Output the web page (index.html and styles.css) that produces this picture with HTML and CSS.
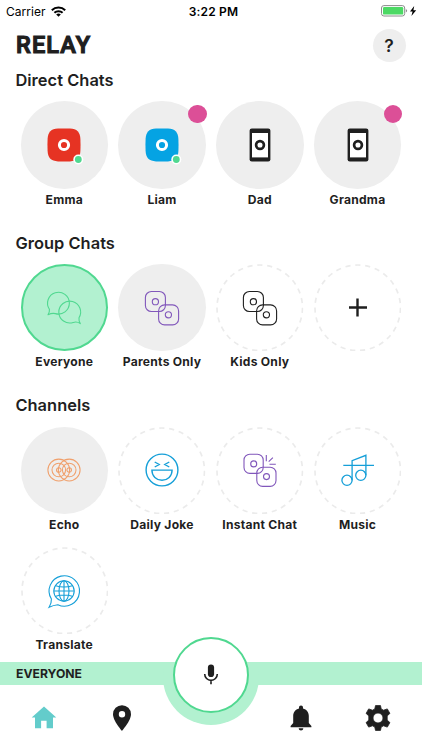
FILE: index.html
```html
<!DOCTYPE html>
<html lang="en">
<head>
<meta charset="utf-8">
<meta name="viewport" content="width=device-width, initial-scale=1">
<title>Relay</title>
<link rel="stylesheet" href="styles.css">
</head>
<body>
<svg class="defs" aria-hidden="true">
  <symbol id="device" viewBox="-22 -22 44 44">
    <path fill="currentColor" d="M-6-16.4Q0-16.700 6-16.400C13-16 16-13 16.400-6Q16.700 0 16.400 6C16 13 13 16 6 16.400Q0 16.700-6 16.400C-13 16-16 13-16.400 6Q-16.700 0-16.400-6C-16-13-13-16-6-16.400Z"/>
    <circle r="4.6" fill="none" stroke="#fff" stroke-width="3"/>
    <circle cx="14.3" cy="14.5" r="5" fill="#fff"/>
    <circle cx="14.3" cy="14.5" r="3.4" fill="#50d890"/>
  </symbol>
  <symbol id="phone" viewBox="-22 -22 44 44">
    <rect x="-10.4" y="-16.5" width="20.8" height="33" rx="2.2" fill="#1f1f1f"/>
    <rect x="-8" y="-12" width="16" height="24.4" fill="#fff"/>
    <circle r="3.9" fill="none" stroke="#1f1f1f" stroke-width="2.7"/>
  </symbol>
  <symbol id="pair" viewBox="-22 -22 44 44">
    <g fill="none" stroke="currentColor" stroke-width="1.1">
      <rect x="-16.6" y="-16.5" width="20" height="20" rx="6"/>
      <rect x="-3.4" y="-3.1" width="20" height="20" rx="6"/>
      <circle cx="-6.6" cy="-6.3" r="3.1"/>
      <circle cx="6.4" cy="6.8" r="3.1"/>
    </g>
  </symbol>
  <symbol id="ring" viewBox="0 0 88 88">
    <circle cx="44" cy="44" r="43" fill="none" stroke="#ebebeb" stroke-width="1.7" pathLength="270" stroke-dasharray="5.2 4.8"/>
  </symbol>
</svg>

<div class="app">
  <div class="status">
    <div class="carrier">Carrier
      <svg width="15" height="11" viewBox="0 0 15 11"><g fill="none" stroke="#000" stroke-width="2"><path d="M.8 4.2a9.6 9.6 0 0 1 13.4 0"/><path d="M3.4 6.8a5.9 5.9 0 0 1 8.2 0"/></g><path d="M7.5 10.8 5.2 8.5a3.3 3.3 0 0 1 4.6 0z"/></svg>
    </div>
    <div class="time">3:22 PM</div>
    <div class="power">
      <svg width="38" height="12" viewBox="0 0 38 12"><rect x=".5" y=".6" width="23.2" height="10.4" rx="2.4" fill="#fff" stroke="#8c8c8c"/><rect x="2" y="2" width="20.2" height="7.6" rx="1.2" fill="#4cd964"/><path d="M24.8 4v3.6q1.3-.6 1.3-1.8T24.8 4z" fill="#8c8c8c"/><path d="M33.2 1 29 6.6h2.6L30.4 11l4.8-5.8h-2.8z"/></svg>
    </div>
  </div>

  <header class="header">
    <h1 class="logo">RELAY</h1>
    <button class="help">?</button>
  </header>

  <main>
    <section class="section">
      <h2>Direct Chats</h2>
      <div class="grid">
        <div class="item"><div class="disc solid red"><svg class="icon"><use href="#device"/></svg></div><span>Emma</span></div>
        <div class="item"><div class="disc solid blue"><svg class="icon"><use href="#device"/></svg><i class="badge"></i></div><span>Liam</span></div>
        <div class="item"><div class="disc solid"><svg class="icon"><use href="#phone"/></svg></div><span>Dad</span></div>
        <div class="item"><div class="disc solid"><svg class="icon"><use href="#phone"/></svg><i class="badge"></i></div><span>Grandma</span></div>
      </div>
    </section>

    <section class="section">
      <h2>Group Chats</h2>
      <div class="grid">
        <div class="item"><div class="disc selected">
          <svg class="icon" viewBox="-22 -22 44 44"><g fill="none" stroke="#50d890" stroke-width="1.1" stroke-linejoin="round"><path d="M-14.6 1.2A10.9 10.9 0 1 1-8.6 5.6Q-12 4.8-16 6.8Q-14.2 4-14.6 1.2Z"/><path d="M15 9.8A10.9 10.9 0 1 0 9.2 14.4Q13 13.2 16.3 15.6Q14.6 12.8 15 9.8Z"/></g></svg>
        </div><span>Everyone</span></div>
        <div class="item"><div class="disc solid purple"><svg class="icon"><use href="#pair"/></svg></div><span>Parents Only</span></div>
        <div class="item"><div class="disc"><svg class="ring"><use href="#ring"/></svg><svg class="icon"><use href="#pair"/></svg></div><span>Kids Only</span></div>
        <div class="item"><div class="disc"><svg class="ring"><use href="#ring"/></svg><svg class="icon" viewBox="-22 -22 44 44"><path d="M-9-.5H9M-.5-9.5V8.500" stroke="#1f1f1f" stroke-width="2.4"/></svg></div></div>
      </div>
    </section>

    <section class="section">
      <h2>Channels</h2>
      <div class="grid">
        <div class="item"><div class="disc solid">
          <svg class="icon" viewBox="-22 -22 44 44"><g fill="none" stroke="#f0a06c" stroke-width="1.05"><circle cx="-5.2" r="10.9"/><circle cx="-5.2" r="6.8"/><circle cx="-5.2" r="2.3"/><circle cx="5.2" r="10.9"/><circle cx="5.2" r="6.8"/><circle cx="5.2" r="2.3"/></g></svg>
        </div><span>Echo</span></div>
        <div class="item"><div class="disc"><svg class="ring"><use href="#ring"/></svg>
          <svg class="icon" viewBox="-22 -22 44 44"><g fill="none" stroke="#159fd8" stroke-width="1.4"><circle r="15.9"/><path d="M-7.3-8-2.8-5.5-7.3-3M7.3-8 2.8-5.5 7.3-3M-10.1.1H10.1C10.1 6.4 5.6 10.3 0 10.3S-10.1 6.4-10.1.1Z"/></g></svg>
        </div><span>Daily Joke</span></div>
        <div class="item"><div class="disc"><svg class="ring"><use href="#ring"/></svg>
          <svg class="icon" viewBox="-22 -22 44 44"><g fill="none" stroke="#8157bb" stroke-width="1.1"><rect x="-16" y="-15.8" width="19.2" height="19.2" rx="5.8"/><rect x="-3.2" y="-2.8" width="19.2" height="19.2" rx="5.8"/><circle cx="-6.3" cy="-6.1" r="3"/><circle cx="6.5" cy="6.6" r="3"/><path d="M6.3-15v6.3M8.7-8.3l4.2-4M9.5-5.7h6.3"/></g></svg>
        </div><span>Instant Chat</span></div>
        <div class="item"><div class="disc"><svg class="ring"><use href="#ring"/></svg>
          <svg class="icon" viewBox="-22 -22 44 44"><g fill="none" stroke="#159fd8" stroke-width="1.3"><circle cx="-11" cy="10.3" r="5.1"/><circle cx="2.8" cy="5.3" r="5.1"/><path d="M-5.9 10.3V-9.4L7.9-14.7V5.3M-14.7-4.7H16"/></g></svg>
        </div><span>Music</span></div>
        <div class="item"><div class="disc"><svg class="ring"><use href="#ring"/></svg>
          <svg class="icon" viewBox="-22 -22 44 44"><g fill="none" stroke="#159fd8" stroke-width="1.1"><path d="M-12.6 8A15.2 15.2 0 1 1-6.2 13.7Q-10.8 14.2-14.9 16.2Q-12.3 11.8-12.6 8Z"/><circle r="10.2"/><ellipse rx="5" ry="10.2"/><path d="M-10.2 0H10.2M0-10.2V10.2M-8.4-5.3Q0-2.8 8.4-5.3M-8.4 5.3Q0 2.8 8.4 5.3"/></g></svg>
        </div><span>Translate</span></div>
      </div>
    </section>
  </main>

  <footer class="footer">
    <div class="band">EVERYONE</div>
    <nav class="nav">
      <svg class="tab" viewBox="-14 -14 28 28"><path fill="#63cccb" d="M0-11.5 12.3-.6H9V10.2H2.6V2.8H-2.9V10.2H-9V-.6H-12.3Z"/></svg>
      <svg class="tab" viewBox="-14 -14 28 28"><path fill="#1f1f1f" fill-rule="evenodd" d="M0-12.8a9 9 0 0 1 9 9C9 2.8 0 12.8 0 12.8S-9 2.8-9-3.8a9 9 0 0 1 9-9ZM0-7a3.2 3.2 0 1 0 0 6.4A3.2 3.2 0 0 0 0-7Z"/></svg>
      <span class="notch"></span>
      <svg class="tab" viewBox="-14 -14 28 28"><path fill="#1f1f1f" d="M0-12.4c1.2 0 2 .8 2 2v.8C5.6-8.7 7.8-5.8 7.8-2V5L10.4 8V9.2H-10.4V8L-7.8 5V-2C-7.8-5.8-5.6-8.7-2-9.6v-.8c0-1.2.8-2 2-2ZM-2.3 10.3H2.3C2.3 11.7 1.2 12.5 0 12.5S-2.3 11.7-2.3 10.3Z"/></svg>
      <svg class="tab" viewBox="-14 -14 28 28"><path fill="#1f1f1f" stroke="#1f1f1f" stroke-width=".8" stroke-linejoin="round" fill-rule="evenodd" d="M-2.5-12.4H2.5L3.2-9.1 5.5-7.8 9.3-9.1 11.9-4.6 9.2-2.1V2.1L11.9 4.6 9.3 9.1 5.5 7.8 3.2 9.1 2.5 12.4H-2.5L-3.2 9.1-5.5 7.8-9.3 9.1-11.9 4.6-9.2 2.1V-2.1L-11.9-4.6-9.3-9.1-5.5-7.8-3.2-9.1ZM0-5A5 5 0 1 0 0 5 5 5 0 0 0 0-5Z"/></svg>
    </nav>
    <div class="halo"></div>
    <button class="talk" aria-label="Talk"><svg width="24" height="24" viewBox="-12 -12 24 24"><rect x="-3.1" y="-10.500" width="6.2" height="12.6" rx="3.1" fill="#1f1f1f"/><path d="M-6.3-.9A6.3 6.3 0 0 0 6.3-.9M0 5.4V9.200" fill="none" stroke="#1f1f1f" stroke-width="1.6"/></svg></button>
  </footer>
</div>
</body>
</html>
```
FILE: styles.css
```css
* { box-sizing: border-box; }
body {
  margin: 0;
  background: #fff;
  color: #1f1f1f;
  font-family: Inter, "Liberation Sans", sans-serif;
}
h1, h2 { margin: 0; }
button { border: 0; padding: 0; font: inherit; color: inherit; }
svg { display: block; }
.defs { position: absolute; width: 0; height: 0; }

.app {
  display: grid;
  grid-template-rows: 22px 46px 594px 88px;
  width: 422px;
  height: 750px;
  overflow: hidden;
}

.status {
  display: grid;
  grid-template-columns: 1fr auto 1fr;
  align-items: center;
  padding: 0 3px 0 6px;
  color: #000;
  font-size: 12px;
}
.carrier { display: flex; align-items: center; gap: 5px; letter-spacing: .05px; }
.time { font-weight: 600; letter-spacing: .2px; padding-left: 2px; }
.power { display: flex; justify-content: flex-end; }

.header {
  display: flex;
  justify-content: space-between;
  align-items: center;
  padding: 0 16.5px 0 16px;
}
.logo {
  font-family: Roboto, Inter, sans-serif;
  font-size: 23.5px;
  line-height: 46px;
  font-weight: 500;
  letter-spacing: 1.1px;
  -webkit-text-stroke: 1.2px #1f1f1f;
}
.help {
  width: 33px;
  height: 33px;
  border-radius: 50%;
  background: #eee;
  font-size: 17.5px;
  font-weight: 600;
}

.section { padding: 0 15.4px; margin-bottom: 9.1px; }
.section h2 {
  height: 33.3px;
  line-height: 24px;
  font-size: 16.4px;
  font-weight: 600;
  letter-spacing: .05px;
}
.grid { display: grid; grid-template-columns: repeat(4, 97.75px); }
.item {
  display: flex;
  flex-direction: column;
  align-items: center;
  height: 120.3px;
  font-size: 12.1px;
  font-weight: 650;
  letter-spacing: .25px;
  white-space: nowrap;
}
.item span { line-height: 22.5px; }
.disc {
  position: relative;
  display: grid;
  place-items: center;
  width: 87.5px;
  height: 87.5px;
  border-radius: 50%;
}
.disc > svg { grid-area: 1 / 1; }
.solid { background: #eee; }
.selected { background: #b2f1d0; border: 2px solid #50d890; }
.red { color: #e63323; }
.blue { color: #05a3e3; }
.purple { color: #8157bb; }
.icon { width: 44px; height: 44px; }
.ring { width: 87.5px; height: 87.5px; }
.badge {
  position: absolute;
  top: 3.3px;
  right: -1.2px;
  width: 18.5px;
  height: 18.5px;
  border-radius: 50%;
  background: #dc4f97;
}

.footer { position: relative; background: #fff; }
.band {
  height: 23px;
  padding-left: 16px;
  background: #b2f1d0;
  font-size: 12.2px;
  line-height: 23px;
  font-weight: 650;
}
.nav {
  display: grid;
  grid-template-columns: 77.5px 77.5px 101.5px 77.5px 77.5px;
  justify-items: center;
  align-items: center;
  height: 65px;
  padding-left: 5.5px;
}
.tab { width: 28px; height: 28px; }
.halo {
  position: absolute;
  left: 163px;
  top: -33px;
  width: 96px;
  height: 96px;
  border-radius: 50%;
  background: #b2f1d0;
  clip-path: inset(33px 0 0 0);
}
.talk {
  position: absolute;
  left: 173px;
  top: -25.5px;
  width: 76px;
  height: 76px;
  display: grid;
  place-items: center;
  border: 2px solid #50d890;
  border-radius: 50%;
  background: #fff;
}
```
